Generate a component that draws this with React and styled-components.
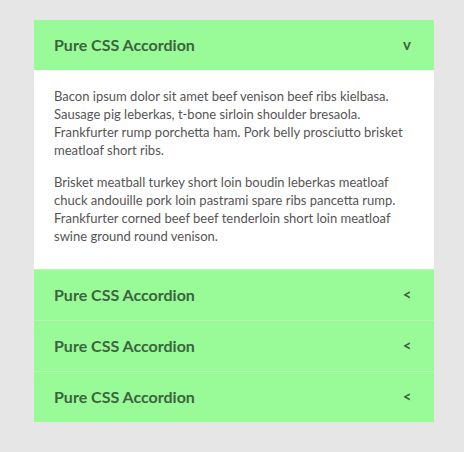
import React, { useState } from "react";
import styled, { createGlobalStyle } from "styled-components";

const GlobalStyle = createGlobalStyle`
  body {
    margin: 0;
    background: #e6e6e6;
    font-family: Lato, "Open Sans", sans-serif;
  }
`;

const items = [
  {
    title: "Pure CSS Accordion",
    paragraphs: [
      "Bacon ipsum dolor sit amet beef venison beef ribs kielbasa. Sausage pig leberkas, t-bone sirloin shoulder bresaola. Frankfurter rump porchetta ham. Pork belly prosciutto brisket meatloaf short ribs.",
      "Brisket meatball turkey short loin boudin leberkas meatloaf chuck andouille pork loin pastrami spare ribs pancetta rump. Frankfurter corned beef beef tenderloin short loin meatloaf swine ground round venison.",
    ],
  },
  { title: "Pure CSS Accordion", paragraphs: [] },
  { title: "Pure CSS Accordion", paragraphs: [] },
  { title: "Pure CSS Accordion", paragraphs: [] },
];

const App = () => {
  const [open, setOpen] = useState(0);

  return (
    <Page>
      <GlobalStyle />
      <Accordion>
        {items.map((item, i) => (
          <Section key={i}>
            <Header onClick={() => setOpen(open === i ? -1 : i)}>
              <Title>{item.title}</Title>
              <Arrow>{open === i ? "v" : "<"}</Arrow>
            </Header>
            {open === i && (
              <Content>
                {item.paragraphs.map((p, j) => (
                  <Para key={j}>{p}</Para>
                ))}
              </Content>
            )}
          </Section>
        ))}
      </Accordion>
    </Page>
  );
};

const Page = styled.div`
  padding: 20px 30px 31px 34px;
`;

const Accordion = styled.div`
  width: 400px;
`;

const Section = styled.div`
  & + & {
    border-top: 1px solid #b0fcb0;
  }
`;

const Header = styled.div`
  display: flex;
  justify-content: space-between;
  align-items: center;
  height: 50px;
  padding: 0 20px 2px;
  box-sizing: border-box;
  background: #98fb98;
  color: #3d643d;
  cursor: pointer;
`;

const Title = styled.div`
  font-size: 16px;
  font-weight: bold;
`;

const Arrow = styled.div`
  font-size: 15px;
  font-weight: bold;
  width: 14px;
  text-align: center;
`;

const Content = styled.div`
  background: #fff;
  padding: 17px 20px 24px;
`;

const Para = styled.p`
  margin: 0;
  font-size: 13px;
  line-height: 18px;
  color: #555;

  & + & {
    margin-top: 14px;
  }
`;

export default App;
